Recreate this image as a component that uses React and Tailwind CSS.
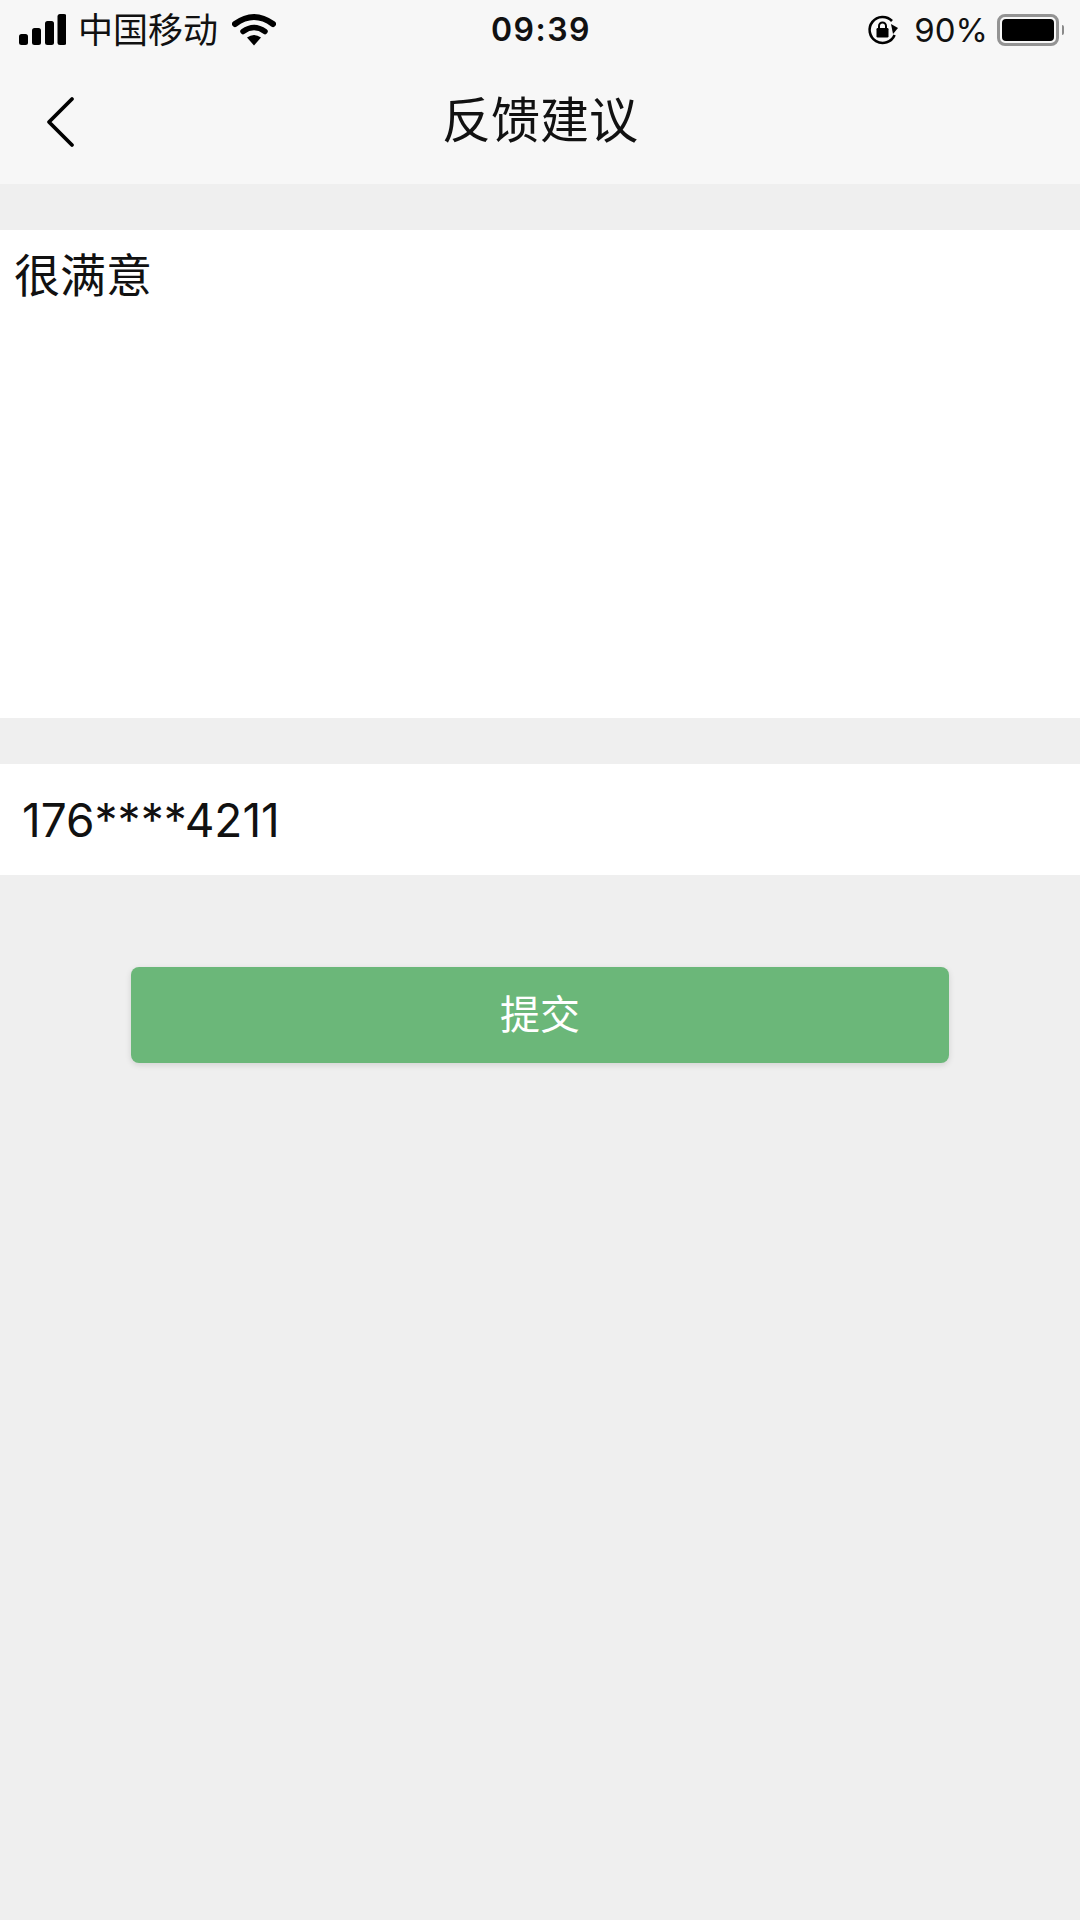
const font = { fontFamily: '"Inter", "Noto Sans CJK SC", sans-serif' };

function Signal() {
  return (
    <svg width="48" height="32" viewBox="0 0 48 32" className="block">
      <rect x="1" y="20" width="9" height="11" rx="2.5" fill="#000" />
      <rect x="14" y="14" width="9" height="17" rx="2.5" fill="#000" />
      <rect x="27" y="7" width="9" height="24" rx="2.5" fill="#000" />
      <rect x="39.5" y="0" width="9" height="31" rx="2.5" fill="#000" />
    </svg>
  );
}

function Wifi() {
  return (
    <svg width="44" height="34" viewBox="0 0 44 34" className="block">
      <path d="M3 11 Q22 -3 41 11" fill="none" stroke="#000" strokeWidth="6" strokeLinecap="round" />
      <path d="M11 18.5 Q22 10.5 33 18.5" fill="none" stroke="#000" strokeWidth="5.5" strokeLinecap="round" />
      <path d="M15 24.5 Q22 19.5 29 24.5 L22 32.5 Z" fill="#000" />
    </svg>
  );
}

function RotationLock() {
  return (
    <svg width="32" height="32" viewBox="0 0 32 32" className="block">
      <path d="M25 7 A13 13 0 1 0 27.6 21" fill="none" stroke="#000" strokeWidth="2.6" />
      <path d="M24 10 L31 14 L26 20 Z" fill="#000" />
      <rect x="9.5" y="14" width="12" height="9.5" rx="1.2" fill="#000" />
      <path d="M12 14 V12 A3.5 3.5 0 0 1 19 12 V14" fill="none" stroke="#000" strokeWidth="2" />
    </svg>
  );
}

function Battery() {
  return (
    <div className="flex items-center gap-[3px]">
      <div className="w-[62px] h-[32px] rounded-[8px] border-[3px] border-[#939393] p-[2px]">
        <div className="w-full h-full rounded-[4px] bg-black" />
      </div>
      <div className="w-[2px] h-[10px] rounded-r-full bg-[#8a8a8a]" />
    </div>
  );
}

export default function App() {
  return (
    <div style={font} className="w-[1080px] h-[1920px] bg-[#efefef] flex flex-col overflow-hidden text-[#111]">
      <header className="h-[184px] bg-[#f7f7f7] flex flex-col">
        <div className="h-[60px] grid grid-cols-3 items-center pl-[18px] pr-[16px]">
          <div className="flex items-center">
            <Signal />
            <span className="ml-[12px] text-[35px] leading-none">中国移动</span>
            <span className="ml-[14px]"><Wifi /></span>
          </div>
          <div className="text-center text-[32px] font-semibold leading-none tracking-[1.5px]">09:39</div>
          <div className="flex items-center justify-end">
            <RotationLock />
            <span className="ml-[15px] mr-[9px] text-[33px] leading-none">90%</span>
            <Battery />
          </div>
        </div>
        <div className="relative flex-1 flex items-center justify-center pb-[4px]">
          <svg width="32" height="52" viewBox="0 0 32 52" className="absolute left-[44px] top-[36px]">
            <path d="M28 3 L5 26 L28 49" fill="none" stroke="#000" strokeWidth="3.8" strokeLinecap="round" strokeLinejoin="round" />
          </svg>
          <h1 className="text-[49px] leading-none font-normal">反馈建议</h1>
        </div>
      </header>

      <section className="mt-[46px] h-[488px] bg-white px-[14px] pt-[21px]">
        <p className="text-[46px] leading-[48px]">很满意</p>
      </section>

      <section className="mt-[46px] h-[111px] bg-white flex items-center pl-[22px]">
        <span className="text-[46px] leading-none">176****4211</span>
      </section>

      <div className="mt-[92px] px-[131px]">
        <button className="w-full h-[96px] rounded-[8px] bg-[#6bb779] text-white text-[40px] leading-none flex items-center justify-center shadow-[0_2px_6px_rgba(0,0,0,0.12)]">
          提交
        </button>
      </div>
    </div>
  );
}
